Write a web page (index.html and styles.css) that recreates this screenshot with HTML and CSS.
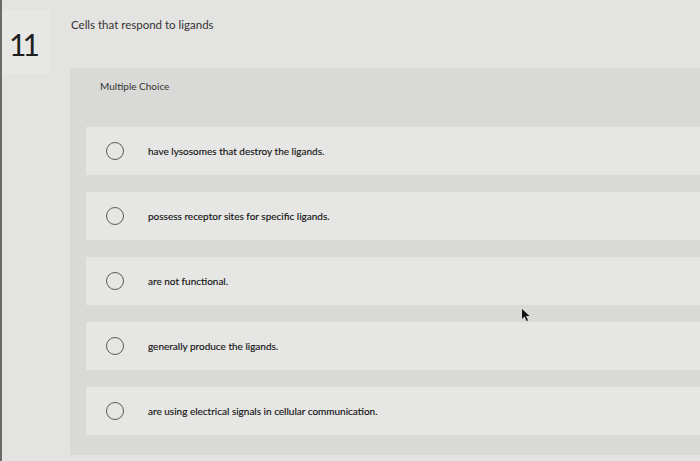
FILE: index.html
```html
<!DOCTYPE html>
<html>
<head>
<meta charset="utf-8">
<link rel="stylesheet" href="styles.css">
</head>
<body>
<div class="page">
  <div class="num-col">
    <div class="num-box">11</div>
  </div>
  <div class="main">
    <div class="question">Cells that respond to ligands</div>
    <div class="panel">
      <div class="panel-head">Multiple Choice</div>
      <div class="options">
        <div class="option"><span class="radio"></span><span class="label">have lysosomes that destroy the ligands.</span></div>
        <div class="option"><span class="radio"></span><span class="label">possess receptor sites for specific ligands.</span></div>
        <div class="option"><span class="radio"></span><span class="label">are not functional.</span></div>
        <div class="option"><span class="radio"></span><span class="label">generally produce the ligands.</span></div>
        <div class="option"><span class="radio"></span><span class="label">are using electrical signals in cellular communication.</span></div>
      </div>
    </div>
  </div>
</div>
<svg class="cursor" width="10" height="14" viewBox="0 0 10 14"><path d="M1 1 L1 11 L3.5 8.5 L5.5 13 L7 12.3 L5 8 L8.5 8 Z" fill="#111"/></svg>
</body>
</html>
```

FILE: styles.css
```css
html, body {
  margin: 0;
  padding: 0;
}
body {
  width: 700px;
  height: 461px;
  overflow: hidden;
  background: #e3e3e1;
  font-family: Lato, "Open Sans", sans-serif;
  color: #2a2a2a;
  border-left: 2px solid #6a6a68;
  box-sizing: border-box;
  position: relative;
}
.page {
  display: flex;
  height: 100%;
}
.num-col {
  width: 68px;
  flex: none;
  padding-top: 10px;
}
.num-box {
  width: 48px;
  height: 64px;
  background: #e7e7e5;
  border-radius: 0 4px 4px 0;
  box-sizing: border-box;
  padding: 19px 0 0 7px;
  font-size: 30px;
  line-height: 30px;
  color: #1e1e1e;
  letter-spacing: -4px;
}
.main {
  flex: 1;
  display: flex;
  flex-direction: column;
}
.question {
  padding: 17px 0 0 1px;
  height: 68px;
  flex: none;
  box-sizing: border-box;
  font-size: 11.5px;
  line-height: 15px;
  color: #333;
}
.panel {
  background: #d9d9d7;
  height: 387px;
  display: flex;
  flex-direction: column;
}
.panel-head {
  height: 59px;
  flex: none;
  box-sizing: border-box;
  padding: 12px 0 0 30px;
  font-size: 10px;
  line-height: 13px;
  color: #333;
}
.options {
  display: flex;
  flex-direction: column;
  gap: 17px;
  padding-left: 16px;
}
.option {
  height: 48px;
  background: #e6e6e4;
  display: flex;
  align-items: center;
  padding-left: 20px;
}
.radio {
  width: 18px;
  height: 18px;
  box-sizing: border-box;
  border: 1.5px solid #5a5a5a;
  border-radius: 50%;
  flex: none;
  margin-right: 24px;
}
.label {
  font-size: 10px;
  color: #151515;
  -webkit-text-stroke: 0.15px #151515;
}
.cursor {
  position: absolute;
  left: 519px;
  top: 308px;
}
```
